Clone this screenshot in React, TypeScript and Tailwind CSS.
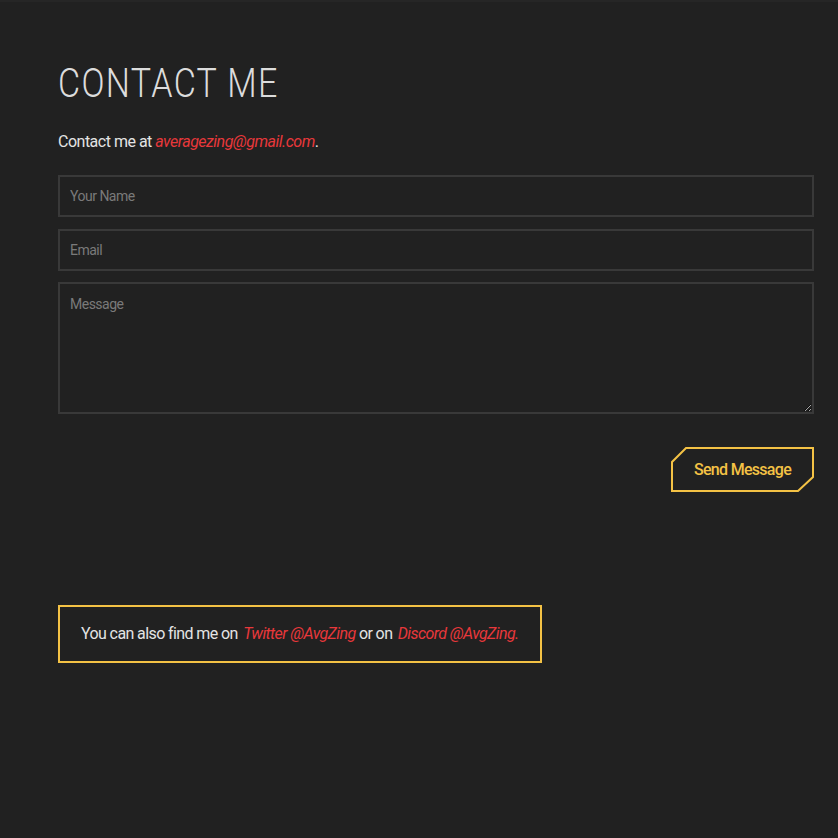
import React from "react";

function SendButton() {
  return (
    <button className="relative w-[143px] h-[45px] text-[16px] font-medium tracking-[-0.7px] text-[#f4c245]">
      <svg className="absolute inset-0" width="143" height="45" viewBox="0 0 143 45">
        <polygon
          points="15,1 142,1 142,30 127,44 1,44 1,15"
          fill="none"
          stroke="#f4c245"
          strokeWidth="2"
        />
      </svg>
      <span className="relative">Send Message</span>
    </button>
  );
}

export default function App() {
  return (
    <div className="min-h-[838px] bg-[#212121] border-t-2 border-[#262626] text-[#e4e4e4] font-['Roboto',sans-serif]">
      <div className="px-[58px] pt-[58px] pr-[24px]">
        <h1 className="origin-left scale-x-[0.85] text-[40px] font-light tracking-[0.04em] leading-[48px] text-[#dcdcdc]">
          CONTACT ME
        </h1>
        <p className="mt-[22px] text-[16px] leading-[24px] tracking-[-0.5px]">
          Contact me at <a className="italic text-[#e8383b]">averagezing@gmail.com</a>.
        </p>
        <form className="mt-[21px] flex flex-col">
          <input
            placeholder="Your Name"
            className="h-[42px] border-2 border-[#393939] bg-transparent px-[10px] text-[14px] tracking-[-0.5px] outline-none placeholder:text-[#7a7a7a]"
          />
          <input
            placeholder="Email"
            className="mt-[12px] h-[42px] border-2 border-[#393939] bg-transparent px-[10px] text-[14px] tracking-[-0.5px] outline-none placeholder:text-[#7a7a7a]"
          />
          <textarea
            placeholder="Message"
            className="mt-[11px] h-[132px] border-2 border-[#393939] bg-transparent px-[10px] py-[10px] text-[14px] tracking-[-0.5px] outline-none placeholder:text-[#7a7a7a]"
          />
          <div className="mt-[33px] flex justify-end">
            <SendButton />
          </div>
        </form>
        <div className="mt-[113px] inline-block border-2 border-[#f4c245] px-[21px] py-[15px] text-[16px] leading-[24px] tracking-[-0.6px]">
          You can also find me on <a className="ml-[2px] italic text-[#e8383b]">Twitter @AvgZing</a> or on{" "}
          <a className="ml-[2px] italic text-[#e8383b]">Discord @AvgZing.</a>
        </div>
      </div>
    </div>
  );
}
